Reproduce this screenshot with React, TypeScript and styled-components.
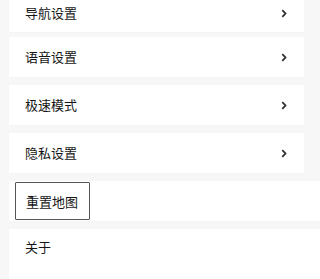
import React from 'react';
import styled, { createGlobalStyle } from 'styled-components';

const GlobalStyle = createGlobalStyle`
  html, body {
    margin: 0;
    padding: 0;
    background: #f7f7f7;
    overflow: hidden;
  }
  body {
    font-family: "Noto Sans CJK SC", "Noto Sans", sans-serif;
  }
`;

const Page = styled.div`
  width: 320px;
  height: 279px;
  padding-left: 9px;
  box-sizing: border-box;
  background: #f7f7f7;
  overflow: hidden;
`;

const List = styled.div`
  display: flex;
  flex-direction: column;
  gap: 8px;
  margin-top: -6px;
`;

const Row = styled.div<{ $full?: boolean; $tall?: boolean; $first?: boolean }>`
  display: flex;
  align-items: ${(p) => (p.$tall ? 'flex-start' : 'center')};
  justify-content: space-between;
  height: ${(p) => (p.$tall ? '52px' : p.$first ? '38px' : '40px')};
  margin-right: ${(p) => (p.$full ? '0' : '16px')};
  margin-bottom: ${(p) => (p.$first ? '-3px' : '0')};
  padding: ${(p) => (p.$tall ? '11px' : '0')} 15px 0 16px;
  box-sizing: border-box;
  background: #ffffff;
  box-shadow: 0 1px 2px rgba(0, 0, 0, 0.015);
  flex-shrink: 0;
`;

const Label = styled.span`
  font-size: 13px;
  line-height: 14px;
  color: #161616;
`;

const ResetRow = styled(Row)`
  padding-left: 6px;
`;

const ResetButton = styled.button`
  display: flex;
  align-items: center;
  height: 38px;
  padding: 0 11px 0 10px;
  border: 1px solid #555;
  border-radius: 1px;
  background: #fff;
  font-family: inherit;
  font-size: 13px;
  color: #161616;
`;

const Chevron = () => (
  <svg width="6" height="9" viewBox="0 0 6 9" style={{ marginRight: 2 }}>
    <polyline points="1.3,1.2 4.5,4.5 1.3,7.8" fill="none" stroke="#2a2a2a" strokeWidth="1.7" />
  </svg>
);

const items = ['导航设置', '语音设置', '极速模式', '隐私设置'];

export default function App() {
  return (
    <>
      <GlobalStyle />
      <Page>
        <List>
          {items.map((t, i) => (
            <Row key={t} $first={i === 0}>
              <Label>{t}</Label>
              <Chevron />
            </Row>
          ))}
          <ResetRow $full>
            <ResetButton>重置地图</ResetButton>
          </ResetRow>
          <Row $full $tall>
            <Label>关于</Label>
          </Row>
        </List>
      </Page>
    </>
  );
}
